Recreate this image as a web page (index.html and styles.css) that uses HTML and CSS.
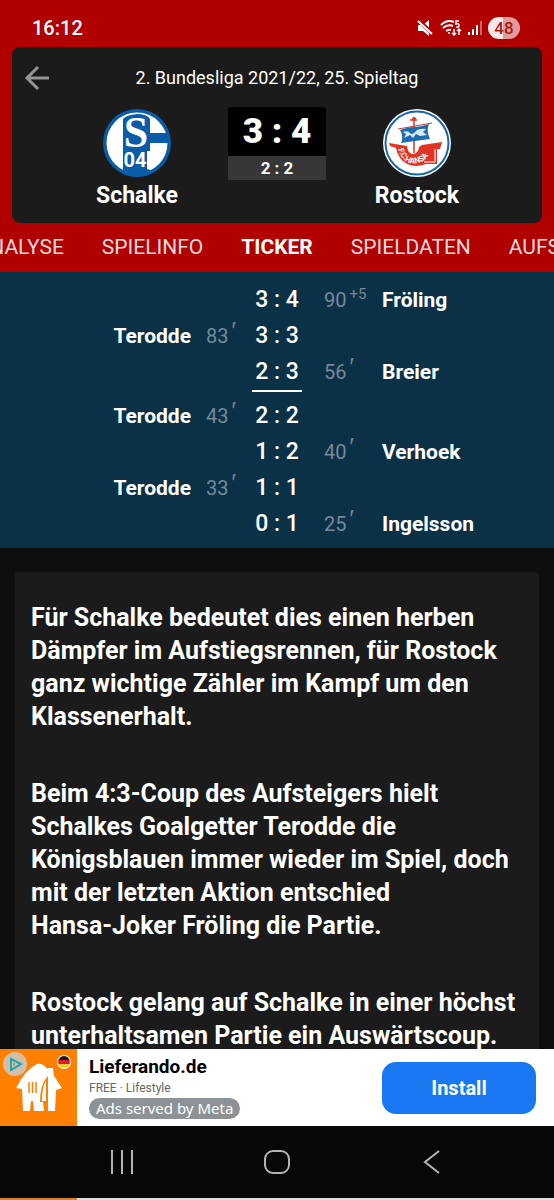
FILE: index.html
```html
<!DOCTYPE html>
<html lang="de">
<head>
    <meta charset="UTF-8">
    <meta name="viewport" content="width=device-width,initial-scale=1">
    <title>Schalke - Rostock 3:4 | Ticker</title>
    <link rel="stylesheet" href="styles.css">
</head>
<body>
    <header class="top">
        <div class="status">
            <span class="time">16:12</span>
            <div class="status-icons">
                <svg width="17" height="18" viewBox="0 0 17 18">
                    <path d="M1 6h5l6-5v16l-6-5H1z" fill="#fff"/>
                    <path d="M0 0l17 16" stroke="#b00000" stroke-width="4"/>
                    <path d="M1 2l14 13" stroke="#fff" stroke-width="2"/>
                </svg>
                <svg width="22" height="18" viewBox="0 0 22 18" fill="none" stroke="#fff" stroke-width="2">
                    <path d="M1 6Q7 0 14 3M3 9q5-4 10-2M6 12q3-2 5-1"/>
                    <circle cx="9" cy="14" r="1" fill="#fff" stroke="none"/>
                    <path d="M19 2h-3v3q3-1 3 1.500t-3 1.500" stroke-width="1.500"/>
                    <path d="M14 10v6m-2-2l2 2 2-2M19 16v-6m-2 2l2-2 2 2" stroke-width="1.500"/>
                </svg>
                <svg width="14" height="16" viewBox="0 0 14 16" fill="#fff">
                    <path d="M0 12h2v3H0zM4 9h2v6H4zM8 5h2v10H8z"/>
                    <path d="M12 1h2v14h-2z" opacity=".4"/>
                </svg>
                <span class="battery">48</span>
            </div>
        </div>

        <section class="match">
            <div class="match-head">
                <button type="button" class="back" aria-label="Zurück">
                    <svg width="26" height="26" viewBox="0 0 26 26" fill="none" stroke="#949494" stroke-width="3">
                        <path d="M25 13H3M14 2L3 13l11 11"/>
                    </svg>
                </button>
                <h1>2. Bundesliga 2021/22, 25. Spieltag</h1>
            </div>
            <div class="teams">
                <div class="team">
                    <svg width="68" height="68" viewBox="0 0 68 68">
                        <circle cx="34" cy="34" r="34" fill="#0a5ca8"/>
                        <circle cx="34" cy="34" r="30.500" fill="#fff"/>
                        <path d="M20 10q3-4 14-5 10 0 13 5v14h19v10H47v8h-3v18q4 1 4 2-6 4-14 4T20 61z" fill="#0a5ca8"/>
                        <text x="33" y="38" class="crest-s">S</text>
                        <text x="32" y="58" class="crest-04">04</text>
                    </svg>
                    <h2>Schalke</h2>
                </div>
                <div class="score">
                    <strong>3 : 4</strong>
                    <span>2 : 2</span>
                </div>
                <div class="team">
                    <svg width="68" height="68" viewBox="0 0 68 68">
                        <defs><path id="hull" d="M15 40Q20 57 34 54T47 36"/></defs>
                        <circle cx="34" cy="34" r="34" fill="#fff"/>
                        <circle cx="34" cy="34" r="31.500" fill="#fff" stroke="#1767ab" stroke-width="2"/>
                        <path d="M6 34l18 3q1 8 6 8t6-7l3-2 20-3-2 7h-3v15H43q-10 4-19 0-9-5-11-16L7 37z" fill="#e03427"/>
                        <path d="M31 8v36M27 11h7" stroke="#d33b30" stroke-width="1.500"/>
                        <circle cx="31" cy="10" r="2" fill="#e03427"/>
                        <path d="M15 20l34-6" stroke="#d33b30"/>
                        <path d="M17 21q8-3 14-3t15-3q-3 7 1 15-8 1-15 2t-14 2q3-7-1-13z" fill="#1c6cb0"/>
                        <path d="M20 23q5-2 7 1t7-3q5-2 9-1l-3 3 4 3-7 1-4-2-3 4-3-3-6 3 2-4z" fill="#d7e7f5"/>
                        <path d="M52 40v13H41" fill="none" stroke="#fff"/>
                        <text class="crest-hansa"><textPath href="#hull">F.C.HANSA</textPath></text>
                    </svg>
                    <h2>Rostock</h2>
                </div>
            </div>
        </section>

        <nav class="tabs">
            <div class="tabs-left">
                <a href="#analyse">ANALYSE</a>
                <a href="#spielinfo">SPIELINFO</a>
            </div>
            <a href="#ticker" class="active">TICKER</a>
            <div class="tabs-right">
                <a href="#spieldaten">SPIELDATEN</a>
                <a href="#aufstellung">AUFSTELLUNG</a>
            </div>
        </nav>
    </header>

    <ol class="goals">
        <li><span class="home"></span><b>3 : 4</b><span class="away"><i>90<sup>+5</sup></i>Fröling</span></li>
        <li><span class="home">Terodde<i>83<sup class="min">′</sup></i></span><b>3 : 3</b><span class="away"></span></li>
        <li class="half"><span class="home"></span><b>2 : 3</b><span class="away"><i>56<sup class="min">′</sup></i>Breier</span></li>
        <li><span class="home">Terodde<i>43<sup class="min">′</sup></i></span><b>2 : 2</b><span class="away"></span></li>
        <li><span class="home"></span><b>1 : 2</b><span class="away"><i>40<sup class="min">′</sup></i>Verhoek</span></li>
        <li><span class="home">Terodde<i>33<sup class="min">′</sup></i></span><b>1 : 1</b><span class="away"></span></li>
        <li><span class="home"></span><b>0 : 1</b><span class="away"><i>25<sup class="min">′</sup></i>Ingelsson</span></li>
    </ol>

    <main class="ticker">
        <article>
            <p>Für Schalke bedeutet dies einen herben<br>Dämpfer im Aufstiegsrennen, für Rostock<br>ganz wichtige Zähler im Kampf um den<br>Klassenerhalt.</p>
            <p>Beim 4:3-Coup des Aufsteigers hielt<br>Schalkes Goalgetter Terodde die<br>Königsblauen immer wieder im Spiel, doch<br>mit der letzten Aktion entschied<br>Hansa-Joker Fröling die Partie.</p>
            <p>Rostock gelang auf Schalke in einer höchst<br>unterhaltsamen Partie ein Auswärtscoup.</p>
        </article>
    </main>

    <aside class="ad">
        <div class="ad-logo">
            <svg width="77" height="77" viewBox="0 0 77 77">
                <path d="M16 39Q26 20 37 15q3-1 6 1l5 4v-1h5l1 8 8 12-6 2-1 21H23l-1-22z" fill="#fff"/>
                <path d="M29 33v11M32.500 33v11M36 33v11" stroke="#ff8000" stroke-width="1.500"/>
                <path d="M31 52h2l1 10h-4zM48 27v35h-4l-1-9h-3q0-18 8-26z" fill="#ff8000"/>
                <path d="M46 32v20h-4q0-14 4-20z" fill="#fff"/>
                <circle cx="15" cy="15" r="12" fill="#d5bea8"/>
                <path d="M11 10l10 5-10 6z" fill="none" stroke="#1ba9b5" stroke-width="2"/>
                <path d="M14 14v3" stroke="#1ba9b5"/>
                <clipPath id="flag"><circle cx="64" cy="13" r="6"/></clipPath>
                <circle cx="64" cy="13" r="7" fill="#fff"/>
                <g clip-path="url(#flag)">
                    <path d="M57 6h14v5H57z" fill="#16161c"/>
                    <path d="M57 11h14v4H57z" fill="#dc1f2b"/>
                    <path d="M57 15h14v5H57z" fill="#fccb22"/>
                </g>
            </svg>
        </div>
        <div class="ad-text">
            <strong>Lieferando.de</strong>
            <small>FREE · Lifestyle</small>
            <span>Ads served by Meta</span>
        </div>
        <button type="button" class="install">Install</button>
    </aside>

    <footer class="sysnav">
        <button type="button" aria-label="Letzte Apps">
            <svg width="26" height="26" viewBox="0 0 26 26" stroke="#b4b4b4" stroke-width="2"><path d="M3 1v24M13 1v24M23 1v24"/></svg>
        </button>
        <button type="button" aria-label="Startseite">
            <svg width="26" height="26" viewBox="0 0 26 26" fill="none" stroke="#b4b4b4" stroke-width="2"><rect x="1" y="2" width="24" height="22" rx="8"/></svg>
        </button>
        <button type="button" aria-label="Zurück">
            <svg width="26" height="26" viewBox="0 0 26 26" fill="none" stroke="#b4b4b4" stroke-width="2"><path d="M20 2L6 13l14 11"/></svg>
        </button>
    </footer>
    <div class="strip"></div>
</body>
</html>
```

FILE: styles.css
```css
*{ box-sizing:border-box;}
html,body{ height:100%; }
body,h1,h2,p,ol{ margin:0; padding:0;}
body{
    display:flex;
    flex-direction:column;
    overflow:hidden;
    background:#0e0e0e;
    color:#fff;
    font-family:Roboto, sans-serif;
}
svg{ display:block;}
button{
    border:0;
    padding:0;
    background:none;
    font:inherit;
    color:inherit;
}

/* header */
.top{ background:#b00000; flex:none;}
.status{
    display:flex;
    justify-content:space-between;
    align-items:center;
    height:47px;
    padding:8px 34px 0 32px;
}
.time{ font-size:20px; font-weight:500;}
.status-icons{ display:flex; align-items:center; gap:6px;}
.battery{
    width:32px;
    border-radius:11px;
    background:linear-gradient(90deg,#fbe9e9 48%,#e39a9a 48%);
    color:#a81a1a;
    font-size:17px;
    line-height:22px;
    font-weight:500;
    text-align:center;
}
.match{
    margin:0 12px;
    padding:15px 12px 11px;
    border-radius:8px;
    background:#1b1b1b;
}
.match-head{
    display:grid;
    grid-template-columns:26px 1fr 26px;
    align-items:center;
    height:32px;
}
.match-head h1{
    font-size:18px;
    line-height:32px;
    font-weight:400;
    text-align:center;
}
.teams{
    display:flex;
    justify-content:center;
    gap:33px;
    padding-top:13px;
}
.team{
    display:flex;
    flex-direction:column;
    align-items:center;
    width:116px;
    padding-top:2px;
}
.team h2{ font-size:23px; line-height:32px; padding-top:3px;}
.score{
    width:98px;
    text-align:center;
    font-weight:700;
}
.score strong,.score span{ display:block;}
.score strong{
    border-radius:3px 3px 0 0;
    background:#000;
    font-size:35px;
    line-height:49px;
}
.score span{
    background:#373737;
    font-size:17px;
    line-height:24px;
}
.crest-s,.crest-04{
    fill:#fff;
    font-weight:700;
    text-anchor:middle;
}
.crest-s{ font-family:"Liberation Serif", serif; font-size:44px;}
.crest-04{ font-size:20px;}
.crest-hansa{
    fill:#fff;
    font-size:8px;
    font-weight:700;
}
.tabs{
    display:flex;
    gap:38px;
    overflow:hidden;
    font-size:21px;
    line-height:49px;
}
.tabs-left,.tabs-right{
    display:flex;
    flex:1 1 0;
    gap:38px;
    min-width:0;
}
.tabs-left{ justify-content:flex-end;}
.tabs a{ color:#f7dada; text-decoration:none;}
.tabs .active{ color:#fff; font-weight:700;}

/* goals */
.goals{
    flex:none;
    list-style:none;
    padding:10px 0 6px;
    background:#0b3147;
    font-size:21px;
    line-height:36px;
    font-weight:700;
}
.goals li{
    display:grid;
    grid-template-columns:1fr 50px 1fr;
}
.goals b{ font-size:23px; font-weight:500; text-align:center;}
.goals i{
    color:#748a99;
    font-size:20px;
    font-style:normal;
    font-weight:400;
}
.goals sup{
    margin-left:3px;
    font-size:15px;
    line-height:0;
    vertical-align:8px;
}
.goals .min{
    font-family:"Liberation Sans", sans-serif;
    font-size:23px;
    vertical-align:4px;
}
.home{ display:flex; justify-content:flex-end;}
.home i{ width:29px; margin:0 17px 0 15px;}
.away{ display:flex;}
.away i{ width:58px; margin-left:22px;}
.goals .half{ padding-bottom:6px;}
.half b{ border-bottom:2px solid #fff;}

/* ticker text */
.ticker{
    flex:1;
    min-height:0;
    overflow:hidden;
    padding:24px 15px 0;
}
.ticker article{
    padding:29px 16px;
    border-radius:4px;
    background:#1b1b1b;
    font-size:25px;
    line-height:33px;
    font-weight:700;
}
.ticker p{ white-space:nowrap; margin-bottom:44px;}

/* ad */
.ad{
    display:flex;
    flex:none;
    align-items:center;
    height:77px;
    padding-right:18px;
    background:#fff;
    color:#000;
}
.ad-logo{ background:#ff8000;}
.ad-text{
    display:flex;
    flex:1;
    flex-direction:column;
    align-items:flex-start;
    padding-left:12px;
}
.ad-text strong{ font-size:19px; line-height:22px;}
.ad-text small{ color:#666; font-size:12px; line-height:20px;}
.ad-text span{
    padding:0 7px;
    border-radius:11px;
    background:#8c9296;
    color:#fff;
    font-family:"Noto Sans", sans-serif;
    font-size:15px;
    line-height:21px;
}
.install{
    width:154px;
    height:52px;
    border-radius:14px;
    background:#1977f2;
    color:#fff;
    font-size:20px;
    font-weight:700;
}

/* system bar */
.sysnav{
    display:flex;
    flex:none;
    justify-content:center;
    gap:129px;
    height:72px;
    background:#080808;
}
.strip{
    flex:none;
    height:2px;
    background:linear-gradient(90deg,#d98324 77px,#ddd 77px);
}
```
